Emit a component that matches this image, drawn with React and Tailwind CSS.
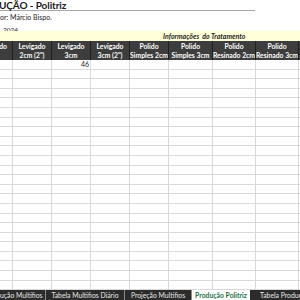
import React from 'react';

const cols = [
  { w: 'w-[13px]', top: 'do', bottom: '' },
  { w: 'w-[39px]', top: 'Levigado', bottom: '2cm (2")' },
  { w: 'w-[39px]', top: 'Levigado', bottom: '3cm' },
  { w: 'w-[39px]', top: 'Levigado', bottom: '3cm (2")' },
  { w: 'w-[39px]', top: 'Polido', bottom: 'Simples 2cm' },
  { w: 'w-[44px]', top: 'Polido', bottom: 'Simples 3cm' },
  { w: 'w-[43px]', top: 'Polido', bottom: 'Resinado 2cm' },
  { w: 'w-[43px]', top: 'Polido', bottom: 'Resinado 3cm' },
  { w: 'w-[20px]', top: '', bottom: '' },
];

const tabs = [
  { label: 'ução Multifios', w: 'w-[46px]', justify: 'justify-start' },
  { label: 'Tabela Multifios Diário', w: 'w-[79px]' },
  { label: 'Projeção Multifios', w: 'w-[67px]' },
  { label: 'Produção Politriz', w: 'w-[58px]', active: true },
  { label: 'Tabela Produção', w: 'w-[60px]', justify: 'justify-start pl-[10px]' },
];

const rows = Array.from({ length: 24 }, (_, i) => i);

export default function App() {
  return (
    <div className="w-[300px] h-[300px] overflow-hidden bg-white flex flex-col font-['Lato',sans-serif]">
      {/* Top header block */}
      <div className="h-[31px] flex flex-col shrink-0">
        <div className="h-[12px] w-[255px] border-b border-[#a6a6a6] flex items-center">
          <p className="text-[10px] font-bold leading-none text-[#1a1a1a] -ml-[1px] tracking-[-0.1px]">UÇÃO - Politriz</p>
        </div>
        <p className="text-[7px] leading-none mt-[3px] text-[#222]">or: Márcio Bispo.</p>
        <p className="text-[6.5px] leading-none mt-[6px] pl-[3px] text-[#222]">2024</p>
      </div>

      {/* Yellow band */}
      <div className="h-[10px] bg-[#ffffd9] shrink-0 flex items-center">
        <p className="ml-[163px] text-[7px] font-bold italic leading-none text-[#1f1f1f]">Informações&nbsp; do Tratamento</p>
      </div>

      {/* Column headers */}
      <div className="h-[19px] bg-[#3d3d3d] flex shrink-0">
        {cols.map((c, i) => (
          <div
            key={i}
            className={`${c.w} shrink-0 border-r border-[#1f1f1f] flex flex-col pt-[1px] text-white text-[6.8px] font-bold leading-[8.5px] whitespace-nowrap overflow-hidden ${i === 0 ? 'items-end pr-[5px]' : 'items-center'}`}
          >
            <span>{c.top}</span>
            <span>{c.bottom}</span>
          </div>
        ))}
      </div>

      {/* Grid body */}
      <div className="flex-1 overflow-hidden">
        {rows.map((r) => (
          <div key={r} className="h-[9.6px] flex border-b border-[#d9d9d9] box-border">
            {cols.map((c, i) => (
              <div
                key={i}
                className={`${c.w} shrink-0 border-r border-[#d9d9d9] text-[7px] leading-[9px] text-right pr-[1px] text-[#222]`}
              >
                {r === 0 && i === 2 ? '46' : ''}
              </div>
            ))}
          </div>
        ))}
      </div>

      {/* Sheet tabs */}
      <div className="h-[10px] bg-[#2b2b2b] flex shrink-0 text-[6.8px] leading-none">
        {tabs.map((t, i) => (
          <div
            key={i}
            className={`${t.w} shrink-0 flex items-center whitespace-nowrap overflow-hidden ${t.justify || 'justify-center'} ${
              t.active ? 'bg-white text-[#1e7145] font-bold' : 'text-[#e6e6e6] border-r border-[#8c8c8c]'
            }`}
          >
            {t.label}
          </div>
        ))}
      </div>
    </div>
  );
}
